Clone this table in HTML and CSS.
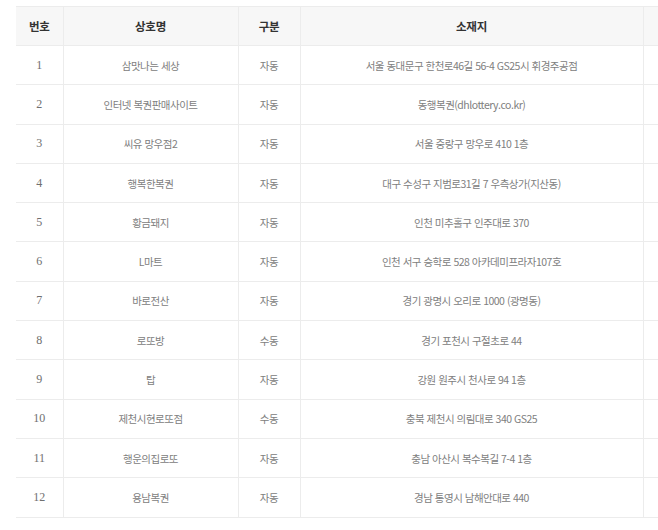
FILE: index.html
```html
<!DOCTYPE html>
<html lang="ko">
<head>
<meta charset="utf-8">
<link rel="stylesheet" href="styles.css">
</head>
<body>
<div class="frame">
<table class="list">
  <colgroup>
    <col class="c-no"><col class="c-name"><col class="c-type"><col class="c-addr"><col class="c-extra">
  </colgroup>
  <thead>
    <tr><th>번호</th><th>상호명</th><th>구분</th><th>소재지</th><th></th></tr>
  </thead>
  <tbody>
    <tr><td class="no">1</td><td>삼맛나는 세상</td><td>자동</td><td>서울 동대문구 한천로46길 56-4 GS25시 휘경주공점</td><td></td></tr>
    <tr><td class="no">2</td><td>인터넷 복권판매사이트</td><td>자동</td><td>동행복권(dhlottery.co.kr)</td><td></td></tr>
    <tr><td class="no">3</td><td>씨유 망우점2</td><td>자동</td><td>서울 중랑구 망우로 410 1층</td><td></td></tr>
    <tr><td class="no">4</td><td>행복한복권</td><td>자동</td><td>대구 수성구 지범로31길 7 우측상가(지산동)</td><td></td></tr>
    <tr><td class="no">5</td><td>황금돼지</td><td>자동</td><td>인천 미추홀구 인주대로 370</td><td></td></tr>
    <tr><td class="no">6</td><td>L마트</td><td>자동</td><td>인천 서구 승학로 528 아카데미프라자107호</td><td></td></tr>
    <tr><td class="no">7</td><td>바로전산</td><td>자동</td><td>경기 광명시 오리로 1000 (광명동)</td><td></td></tr>
    <tr><td class="no">8</td><td>로또방</td><td>수동</td><td>경기 포천시 구절초로 44</td><td></td></tr>
    <tr><td class="no">9</td><td>탑</td><td>자동</td><td>강원 원주시 천사로 94 1층</td><td></td></tr>
    <tr><td class="no">10</td><td>제천시현로또점</td><td>수동</td><td>충북 제천시 의림대로 340 GS25</td><td></td></tr>
    <tr><td class="no">11</td><td>행운의집로또</td><td>자동</td><td>충남 아산시 복수복길 7-4 1층</td><td></td></tr>
    <tr><td class="no">12</td><td>용남복권</td><td>자동</td><td>경남 통영시 남해안대로 440</td><td></td></tr>
  </tbody>
</table>
</div>
</body>
</html>
```
FILE: styles.css
```css
html, body {
  margin: 0;
  padding: 0;
  background: #fff;
  overflow: hidden;
}
body {
  padding: 6px 0 0 16px;
  font-family: "Noto Sans CJK KR", "Noto Sans", sans-serif;
}
.frame {
  width: 642px;
  overflow: hidden;
}
.list {
  border-collapse: collapse;
  table-layout: fixed;
  width: 700px;
  border-top: 1px solid #a9a9a9;
}
.c-no { width: 47px; }
.c-name { width: 175px; }
.c-type { width: 62px; }
.c-addr { width: 343px; }
.c-extra { width: 73px; }
.list th, .list td {
  border: 1px solid #ececec;
  text-align: center;
  padding: 0;
  white-space: nowrap;
  overflow: hidden;
}
.list tr > :first-child { border-left: 0; }
.list th {
  height: 38px;
  background: #f7f7f7;
  color: #333;
  font-size: 11.5px;
  font-weight: bold;
  letter-spacing: -0.3px;
}
.list td {
  height: 38.3px;
  color: #808080;
  font-size: 10.5px;
  letter-spacing: -0.5px;
}
.list td.no {
  font-family: "Liberation Serif", serif;
  font-size: 12px;
  letter-spacing: 0;
  color: #707070;
}
```
